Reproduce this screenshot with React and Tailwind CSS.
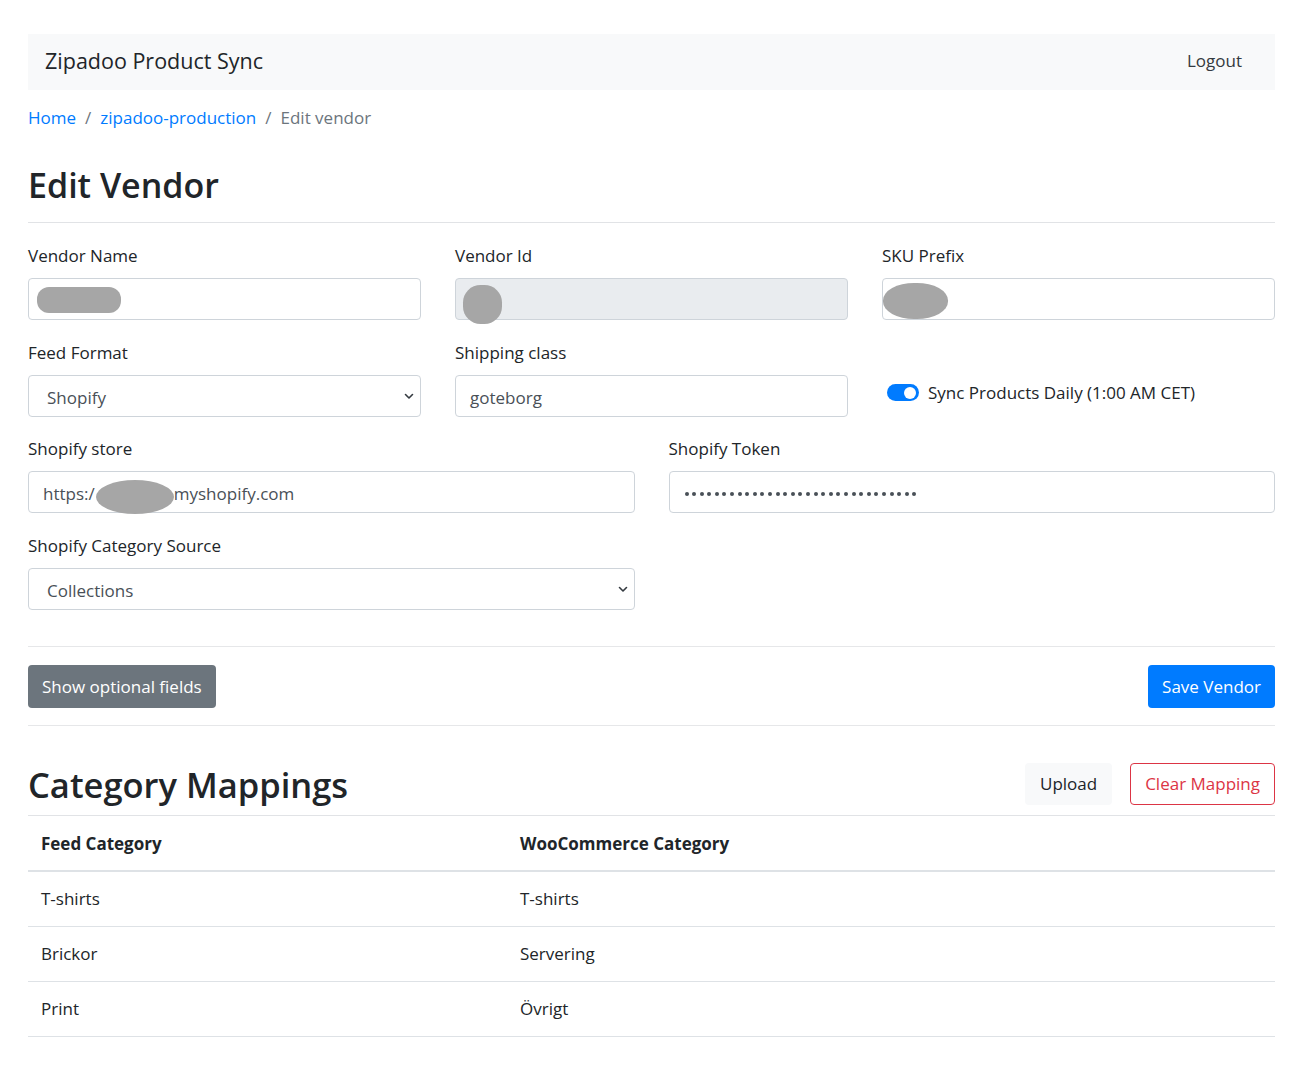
import React from "react";

function Chevron() {
  return (
    <svg width="10" height="8" viewBox="0 0 10 8" className="absolute right-[6px] top-1/2 -translate-y-1/2">
      <path d="M1.5 2.5 L5 6 L8.5 2.5" fill="none" stroke="#343a40" strokeWidth="1.6" strokeLinecap="round" strokeLinejoin="round" />
    </svg>
  );
}

function Label({ children }) {
  return <div className="h-[26px] leading-[26px] text-[17px] text-[#212529] mb-[9px]">{children}</div>;
}

const inputCls =
  "relative h-[42px] rounded-[4px] border border-[#ced4da] bg-white flex items-center pt-[3px] text-[17px] text-[#495057]";

export default function App() {
  const dots = Array.from({ length: 31 });
  const rows = [
    ["T-shirts", "T-shirts"],
    ["Brickor", "Servering"],
    ["Print", "Övrigt"],
  ];
  return (
    <div className="min-h-screen bg-white font-['Open_Sans','Noto_Sans',sans-serif] text-[#212529]">
      <div className="ml-[28px] w-[1247px] pt-[34px] pb-[40px]">
        {/* Navbar */}
        <nav className="h-[56px] bg-[#f8f9fa] flex items-center justify-between pl-[17px] pr-[33px] pb-[2px]">
          <span className="text-[21.5px] text-[#212529]">Zipadoo Product Sync</span>
          <span className="text-[17px] text-[#343a40]">Logout</span>
        </nav>

        {/* Breadcrumb */}
        <div className="mt-[15px] h-[26px] flex items-center text-[17px]">
          <span className="text-[#007bff]">Home</span>
          <span className="text-[#6c757d] px-[9px]">/</span>
          <span className="text-[#007bff]">zipadoo-production</span>
          <span className="text-[#6c757d] px-[9px]">/</span>
          <span className="text-[#6c757d]">Edit vendor</span>
        </div>

        {/* Heading */}
        <h2 className="mt-[33px] h-[42px] leading-[42px] text-[34px] font-semibold text-[#212529]">Edit Vendor</h2>
        <div className="mt-[16px] border-t border-[#e1e3e6]" />

        {/* Row 1 */}
        <div className="mt-[20px] grid grid-cols-3 gap-x-[34px]">
          <div>
            <Label>Vendor Name</Label>
            <div className={inputCls}>
              <span className="absolute left-[8px] top-[8px] w-[84px] h-[26px] rounded-[12px] bg-[#a6a6a6]" />
            </div>
          </div>
          <div>
            <Label>Vendor Id</Label>
            <div className={inputCls + " !bg-[#e9ecef]"}>
              <span className="absolute left-[7px] top-[6px] w-[39px] h-[39px] rounded-[45%] bg-[#a6a6a6]" />
            </div>
          </div>
          <div>
            <Label>SKU Prefix</Label>
            <div className={inputCls}>
              <span className="absolute left-[0px] top-[4px] w-[65px] h-[36px] rounded-[48%] bg-[#a6a6a6]" />
            </div>
          </div>
        </div>

        {/* Row 2 */}
        <div className="mt-[20px] grid grid-cols-3 gap-x-[34px]">
          <div>
            <Label>Feed Format</Label>
            <div className={inputCls + " pl-[18px]"}>
              Shopify
              <Chevron />
            </div>
          </div>
          <div>
            <Label>Shipping class</Label>
            <div className={inputCls + " pl-[14px]"}>goteborg</div>
          </div>
          <div className="pt-[40px] pl-[5px] flex items-start">
            <div className="flex items-center gap-[9px]">
              <span className="relative w-[32px] h-[17px] rounded-full bg-[#007bff] inline-block">
                <span className="absolute right-[3px] top-[2.5px] w-[12px] h-[12px] rounded-full bg-white" />
              </span>
              <span className="text-[17px] text-[#212529]">Sync Products Daily (1:00 AM CET)</span>
            </div>
          </div>
        </div>

        {/* Row 3 */}
        <div className="mt-[19px] grid grid-cols-2 gap-x-[34px]">
          <div>
            <Label>Shopify store</Label>
            <div className={inputCls + " pl-[14px]"}>
              https:/<span className="inline-block w-[79px]" />myshopify.com
              <span className="absolute left-[67px] top-[8px] w-[78px] h-[34px] rounded-[50%] bg-[#a6a6a6]" />
            </div>
          </div>
          <div>
            <Label>Shopify Token</Label>
            <div className={inputCls + " pl-[15px] gap-[3.6px]"}>
              {dots.map((_, i) => (
                <span key={i} className="w-[4px] h-[4px] rounded-full bg-[#495057]" />
              ))}
            </div>
          </div>
        </div>

        {/* Row 4 */}
        <div className="mt-[20px] grid grid-cols-2 gap-x-[34px]">
          <div>
            <Label>Shopify Category Source</Label>
            <div className={inputCls + " pl-[18px]"}>
              Collections
              <Chevron />
            </div>
          </div>
        </div>

        <div className="mt-[36px] border-t border-[#e6e7e9]" />

        {/* Buttons */}
        <div className="mt-[18px] flex justify-between">
          <button className="h-[43px] px-[14px] rounded-[4px] bg-[#6c757d] text-white text-[17px]">Show optional fields</button>
          <button className="h-[43px] px-[14px] rounded-[4px] bg-[#007bff] text-white text-[17px]">Save Vendor</button>
        </div>

        <div className="mt-[17px] border-t border-[#e6e7e9]" />

        {/* Category Mappings */}
        <div className="mt-[36px] flex items-end justify-between">
          <h2 className="h-[44px] leading-[44px] text-[34.5px] font-semibold text-[#212529] translate-y-[1px]">Category Mappings</h2>
          <div className="flex gap-[18px] mb-[1px]">
            <button className="h-[42px] px-[15px] rounded-[4px] bg-[#f8f9fa] text-[#212529] text-[17px]">Upload</button>
            <button className="h-[42px] px-[14px] rounded-[4px] border border-[#dc3545] text-[#dc3545] text-[17px]">Clear Mapping</button>
          </div>
        </div>
        <div className="mt-[9px] border-t border-[#e1e3e6]" />

        {/* Table */}
        <table className="w-full text-[17px] text-[#212529] border-collapse">
          <thead>
            <tr className="border-b-2 border-[#dee2e6]">
              <th className="w-[492px] h-[55px] text-left font-bold pl-[13px] pt-[2px]">Feed Category</th>
              <th className="h-[55px] text-left font-bold pt-[2px]">WooCommerce Category</th>
            </tr>
          </thead>
          <tbody>
            {rows.map((r, i) => (
              <tr key={i} className="border-b border-[#dee2e6]">
                <td className="h-[55px] pl-[13px]">{r[0]}</td>
                <td className="h-[55px]">{r[1]}</td>
              </tr>
            ))}
          </tbody>
        </table>
      </div>
    </div>
  );
}
